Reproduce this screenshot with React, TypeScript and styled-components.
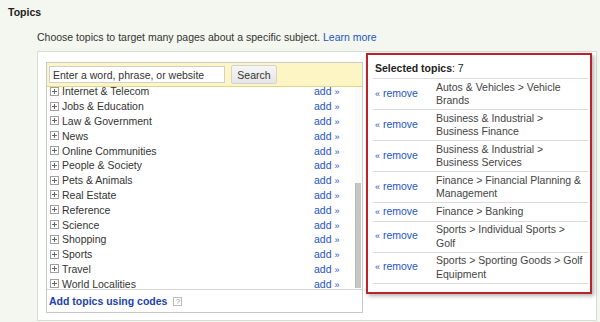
import styled, { createGlobalStyle } from "styled-components"

const GlobalStyle = createGlobalStyle`
  html, body {
    margin: 0;
    padding: 0;
    background: #f3f7ef;
  }
  body {
    font-family: "Liberation Sans", Arial, sans-serif;
    color: #333;
  }
`

const categories = [
  "Internet & Telecom",
  "Jobs & Education",
  "Law & Government",
  "News",
  "Online Communities",
  "People & Society",
  "Pets & Animals",
  "Real Estate",
  "Reference",
  "Science",
  "Shopping",
  "Sports",
  "Travel",
  "World Localities",
]

const selected = [
  "Autos & Vehicles > Vehicle Brands",
  "Business & Industrial > Business Finance",
  "Business & Industrial > Business Services",
  "Finance > Financial Planning & Management",
  "Finance > Banking",
  "Sports > Individual Sports > Golf",
  "Sports > Sporting Goods > Golf Equipment",
]

const Page = styled.div`
  padding: 5px 8px 0;
  height: 322px;
  box-sizing: border-box;
`
const Heading = styled.div`
  font-weight: bold;
  font-size: 10.5px;
  line-height: 14px;
  color: #222;
`
const Intro = styled.p`
  margin: 11px 0 0 29px;
  font-size: 10.5px;
  line-height: 14px;
  color: #333;
`
const Link = styled.a`
  color: #2454c6;
  text-decoration: none;
  cursor: pointer;
`
const Frame = styled.div`
  margin: 7px 0 0 29px;
  width: 560px;
  height: 270px;
  box-sizing: border-box;
  background: #fff;
  border: 1px solid #d9dcd6;
  display: flex;
  align-items: flex-start;
  padding: 1px 0 0 8px;
`
const Browser = styled.div`
  margin-top: 9px;
  width: 317px;
  height: 251px;
  box-sizing: border-box;
  border: 1px solid #c9c9c9;
  display: flex;
  flex-direction: column;
`
const SearchBar = styled.div`
  height: 24px;
  box-sizing: border-box;
  background: #fdf5c4;
  border-bottom: 1px solid #e3d68a;
  display: flex;
  align-items: center;
  padding-left: 2px;
  gap: 6px;
  position: relative;
  z-index: 1;
`
const SearchInput = styled.input`
  width: 176px;
  height: 17px;
  box-sizing: border-box;
  border: 1px solid #cfcfcf;
  background: #fff;
  padding: 0 3px;
  font-family: inherit;
  font-size: 10.5px;
  color: #333;
  outline: none;
  &::placeholder {
    color: #333;
  }
`
const SearchButton = styled.button`
  width: 46px;
  height: 19px;
  box-sizing: border-box;
  border: 1px solid #d3d3d3;
  border-radius: 2px;
  background: linear-gradient(#f6f6f6, #e6e6e6);
  font-family: inherit;
  font-size: 10.5px;
  color: #333;
  padding: 0;
`
const ListArea = styled.div`
  height: 202px;
  display: flex;
`
const Rows = styled.div`
  flex: 1;
  margin-top: -3px;
`
const Row = styled.div`
  height: 14.8px;
  display: flex;
  align-items: center;
  font-size: 10.5px;
`
const Expander = styled.span`
  width: 9px;
  height: 9px;
  box-sizing: border-box;
  border: 1px solid #a0a0a0;
  margin-left: 3px;
  position: relative;
  flex: none;
  &::before,
  &::after {
    content: "";
    position: absolute;
    background: #666;
  }
  &::before {
    left: 1px;
    right: 1px;
    top: 3px;
    height: 1px;
  }
  &::after {
    top: 1px;
    bottom: 1px;
    left: 3px;
    width: 1px;
  }
`
const Label = styled.span`
  flex: 1;
  margin-left: 3px;
  color: #333;
`
const AddLink = styled(Link)`
  width: 41px;
  font-size: 10.5px;
`
const Chevrons = styled.span`
  font-size: 9px;
`
const Track = styled.div`
  width: 6px;
  margin-right: 1px;
  padding-top: 96px;
  background: #fafafa;
`
const Thumb = styled.div`
  height: 105px;
  background: #c6c6c6;
  border-left: 1px solid #b8b8b8;
`
const Footer = styled.div`
  height: 23px;
  box-sizing: border-box;
  border-top: 1px solid #d5d5d5;
  background: #fff;
  display: flex;
  align-items: center;
  padding-left: 2px;
`
const CodesLink = styled(Link)`
  font-weight: bold;
  font-size: 10.5px;
  color: #1d3fae;
`
const HelpIcon = styled.span`
  margin-left: 6px;
  width: 9px;
  height: 9px;
  box-sizing: border-box;
  border: 1px solid #bdbdbd;
  font-size: 7px;
  line-height: 7px;
  text-align: center;
  color: #888;
`
const Selected = styled.div`
  margin-left: 3px;
  width: 226px;
  height: 241px;
  box-sizing: border-box;
  border: 2px solid #b8232c;
  box-shadow: 2px 2px 4px rgba(0, 0, 0, 0.3);
  background: #fff;
  padding: 0 2px 0 5px;
`
const SelectedHeader = styled.div`
  padding: 6px 0 3px 2px;
  line-height: 14px;
  font-size: 10.5px;
  color: #222;
  border-bottom: 1px solid #dcdcdc;
`
const Strong = styled.b`
  font-weight: bold;
`
const SelectedRow = styled.div`
  display: flex;
  align-items: center;
  padding: 1.5px 0;
  border-bottom: 1px solid #dcdcdc;
  font-size: 10.5px;
  line-height: 13.5px;
`
const RemoveLink = styled(Link)`
  width: 63px;
  padding-left: 2px;
  box-sizing: border-box;
  flex: none;
`
const TopicPath = styled.span`
  width: 149px;
  color: #444;
`

export default function App() {
  return (
    <>
      <GlobalStyle />
      <Page>
        <Heading>Topics</Heading>
        <Intro>
          Choose topics to target many pages about a specific subject. <Link>Learn more</Link>
        </Intro>
        <Frame>
          <Browser>
            <SearchBar>
              <SearchInput placeholder="Enter a word, phrase, or website" />
              <SearchButton>Search</SearchButton>
            </SearchBar>
            <ListArea>
              <Rows>
                {categories.map((name) => (
                  <Row key={name}>
                    <Expander />
                    <Label>{name}</Label>
                    <AddLink>
                      add <Chevrons>»</Chevrons>
                    </AddLink>
                  </Row>
                ))}
              </Rows>
              <Track>
                <Thumb />
              </Track>
            </ListArea>
            <Footer>
              <CodesLink>Add topics using codes</CodesLink>
              <HelpIcon>?</HelpIcon>
            </Footer>
          </Browser>
          <Selected>
            <SelectedHeader>
              <Strong>Selected topics</Strong>: 7
            </SelectedHeader>
            {selected.map((path) => (
              <SelectedRow key={path}>
                <RemoveLink>
                  <Chevrons>«</Chevrons> remove
                </RemoveLink>
                <TopicPath>{path}</TopicPath>
              </SelectedRow>
            ))}
          </Selected>
        </Frame>
      </Page>
    </>
  )
}
